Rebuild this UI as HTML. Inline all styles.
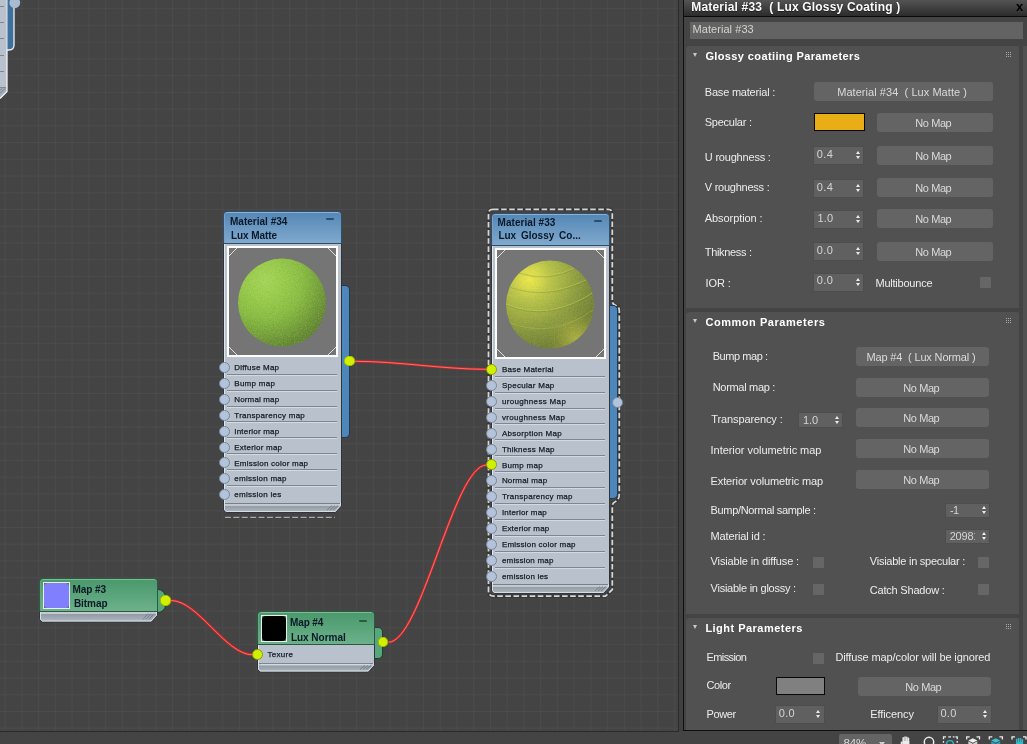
<!DOCTYPE html>
<html><head><meta charset="utf-8"><title>Slate Material Editor</title>
<style>
*{box-sizing:border-box;margin:0;padding:0}
html,body{width:1027px;height:744px;overflow:hidden;background:#444;font-family:"Liberation Sans",sans-serif;}
.t{position:absolute;white-space:pre;will-change:transform}
#canvas{position:absolute;left:0;top:0;width:678px;height:731px;overflow:hidden;background-color:#444;
 background-image:linear-gradient(to right,#4b4b4b 1px,transparent 1px),linear-gradient(to bottom,#4b4b4b 1px,transparent 1px);
 background-size:16.74px 16.74px;background-position:4.7px 8.2px;}
#cvr{position:absolute;left:678px;top:0;width:1px;height:732px;background:#2b2b2b}
#cvb{position:absolute;left:0;top:731px;width:679px;height:1px;background:#2b2b2b}
#gap{position:absolute;left:679px;top:0;width:4px;height:731px;background:#404040}
#pl{position:absolute;left:683px;top:0;width:1px;height:731px;background:#111}
#pb{position:absolute;left:683px;top:730px;width:344px;height:1px;background:#111}
#panel{position:absolute;left:684px;top:0;width:343px;height:730px;background:#444;overflow:hidden}
#ptitle{position:absolute;left:0;top:0;width:343px;height:16px;background:linear-gradient(#545454,#2c2c2c);}
#pline{position:absolute;left:0;top:16px;width:343px;height:1px;background:#0a0a0a}
#pname{position:absolute;left:6px;top:22px;width:333px;height:17px;background:#636363}
#pscroll{position:absolute;left:339px;top:46px;width:4px;height:684px;background:#515151}
.roll{position:absolute;left:2px;width:333px;background:#515151;border-radius:4px 2px 0 0}
.tri{position:absolute;width:0;height:0;border-left:2.8px solid transparent;border-right:2.8px solid transparent;border-top:4.6px solid #c8c8c8}
.grip{position:absolute;width:1px;height:1px;background:#a8a8a8;box-shadow:2px 0 #a8a8a8,4px 0 #a8a8a8,0 2px #a8a8a8,2px 2px #a8a8a8,4px 2px #a8a8a8,0 4px #a8a8a8,2px 4px #a8a8a8,4px 4px #a8a8a8}
.btn{position:absolute;background:#646464;border-radius:3px}
.spin{position:absolute;background:#606060;box-shadow:0 0 0 0.5px #4a4a4a}
.spin:before{content:"";position:absolute;right:3.2px;top:calc(50% - 4.5px);border-left:2.9px solid transparent;border-right:2.9px solid transparent;border-bottom:3.7px solid #ececec}
.spin:after{content:"";position:absolute;right:3.2px;top:calc(50% + 1px);border-left:2.9px solid transparent;border-right:2.9px solid transparent;border-top:3.7px solid #ececec}
.sw{position:absolute;border:1px solid #080808}
.cb{position:absolute;width:11px;height:11px;background:#666;border-radius:1px}

/* nodes */
.hd{position:absolute;border:1px solid #2d4e6e;border-radius:4px 4px 0 0;background:linear-gradient(#5487b6,#80a9cd);box-shadow:inset 0 1px 0 #8db2d4, inset 1px 0 0 #76a0c8}
.hd.g{border-color:#2b5a41;background:linear-gradient(#4a986c,#6cb18a);box-shadow:inset 0 1px 0 #7cbc97, inset 1px 0 0 #62a882}
.min{position:absolute;width:8px;height:2px;background:#2c4d6e;border-radius:1px}
.min.g{background:#2b5a41}
.body{position:absolute;background:#b9c2cc;border:1px solid #2f353c;border-top:none;border-bottom:none;box-shadow:inset 1px 0 0 #dde4ea}
.thumb{position:absolute;border:2px solid #fff;background:#757575;overflow:hidden}
.sock{position:absolute;width:11px;height:11px;border-radius:50%;background:#b3c4da;border:1px solid #76869a}
.sock.lit{background:#d0f200;border-color:#8a9c10}
.sep{position:absolute;height:1px;background:#7e8791;box-shadow:0 1px 0 #d3dae1}
.foot{position:absolute;background:linear-gradient(#c6cdd5 0,#c6cdd5 22%,#8f98a2 32%,#a9b1ba 100%);border:1px solid #e3e9ef;border-top:none;border-radius:0 0 0 3px}
.tab{position:absolute;background:#4c86ba;border:1px solid #24384c;border-left:none;border-radius:0 5px 5px 0}
.tab.g{background:#58a67b;border-color:#1f4030}
.mth{position:absolute;border:1px solid #e6efe8;background:#5b6f66;overflow:hidden}
.mth:before{content:"";position:absolute;left:0;top:0;right:0;bottom:0;border-radius:4px;background:var(--c)}
.osock{position:absolute;width:10.8px;height:10.8px;border-radius:50%;background:#d0f200;box-shadow:inset 0 0 0 0.6px #8ea400}
</style></head>
<body>
<div id="canvas">
<svg style="position:absolute;left:0;top:0" width="0" height="0"><defs><linearGradient id="fg10" x1="0" y1="0" x2="0" y2="1"><stop offset="0" stop-color="#c3cad2"/><stop offset="0.26" stop-color="#c3cad2"/><stop offset="0.3" stop-color="#939ca6"/><stop offset="0.85" stop-color="#aab2bb"/><stop offset="1" stop-color="#b6bec6"/></linearGradient><linearGradient id="fg11" x1="0" y1="0" x2="0" y2="1"><stop offset="0" stop-color="#c3cad2"/><stop offset="0.3" stop-color="#c3cad2"/><stop offset="0.34" stop-color="#939ca6"/><stop offset="0.85" stop-color="#aab2bb"/><stop offset="1" stop-color="#b6bec6"/></linearGradient><linearGradient id="fg9" x1="0" y1="0" x2="0" y2="1"><stop offset="0" stop-color="#c3cad2"/><stop offset="0.2" stop-color="#c3cad2"/><stop offset="0.25" stop-color="#939ca6"/><stop offset="0.85" stop-color="#aab2bb"/><stop offset="1" stop-color="#b6bec6"/></linearGradient></defs></svg>
<svg style="position:absolute;left:0;top:0" width="24" height="102"><path d="M0 0H7V91.500L0.500 98H0Z" fill="#b9c2cc"/><path d="M0 88H7V91.500L0.500 98H0Z" fill="#a4adb7"/><path d="M0 6.500H4M0 22.500H4M0 38.500H4M0 55.500H4M0 71.500H4M0 87.500H6" stroke="#7e8791" stroke-width="1"/><path d="M0 90.500L2 88.500M0 93.500L5 88.500" stroke="#6c7681" stroke-width="0.8"/><path d="M7 0H14V45Q14 50 9 50H7Z" fill="#3f6f9b"/><path d="M14 7V45Q14 50 9 50H7V91.500L0 98.500" fill="none" stroke="#eef3f8" stroke-width="1.3"/><path d="M7 0V50" stroke="#dfe7ee" stroke-width="1"/><circle cx="14.800" cy="2.800" r="5.400" fill="#a9bbd3"/></svg>
<svg style="position:absolute;left:0;top:0" width="678" height="730" fill="none"><path d="M354.800 361.300 C398.700 361.300 442.600 369.300 486.500 369.300" stroke="#cf2626" stroke-width="2.5"/><path d="M354.800 361.300 C398.700 361.300 442.600 369.300 486.500 369.300" stroke="#f67878" stroke-width="0.9"/><path d="M171 600.500 C198.200 600.500 225.400 654.800 252.600 654.800" stroke="#cf2626" stroke-width="2.5"/><path d="M171 600.500 C198.200 600.500 225.400 654.800 252.600 654.800" stroke="#f67878" stroke-width="0.9"/><path d="M388.500 642.200 C421.200 642.200 453.800 465 486.500 465" stroke="#cf2626" stroke-width="2.5"/><path d="M388.500 642.200 C421.200 642.200 453.800 465 486.500 465" stroke="#f67878" stroke-width="0.9"/></svg>
<div class="tab" style="left:341px;top:285px;width:9px;height:153px"></div>
<div class="body" style="left:223px;top:243px;width:119px;height:261px"></div>
<svg style="position:absolute;left:223px;top:503px" width="119" height="10"><polygon points="0.5,0 0.5,7 3,9.5 112.5,9.5 118.5,3.0 118.5,0" fill="url(#fg10)" stroke="#2f353c" stroke-width="1"/><polyline points="1.5,0 1.5,6.7 3.4,8.5 112.1,8.5 117.5,2.6 117.5,0" fill="none" stroke="#d6dde4" stroke-width="1"/><path d="M104 7L109 2.5M107 7L112 2.5M110 7L115 2.5" stroke="#6c7681" stroke-width="0.8"/></svg>
<div class="hd" style="left:223px;top:211px;width:119px;height:33px"></div>
<div class="thumb" style="left:226.7px;top:246px;width:111px;height:111px"><svg style="position:absolute;left:0;top:0" width="107" height="107"><defs><radialGradient id="sg1" cx="0.31" cy="0.25" r="0.78" fx="0.31" fy="0.25"><stop offset="0" stop-color="#a6d657"/><stop offset="0.28" stop-color="#97cc48"/><stop offset="0.55" stop-color="#87bd3e"/><stop offset="0.78" stop-color="#73a234"/><stop offset="1" stop-color="#5f8529"/></radialGradient><filter id="nz1" x="-5%" y="-5%" width="110%" height="110%"><feTurbulence type="fractalNoise" baseFrequency="0.75" numOctaves="2" seed="5" result="n"/><feColorMatrix in="n" type="matrix" values="0 0 0 0 0  0 0 0 0 0  0 0 0 0 0  0.252 0 0 0 -0.090" result="dk"/><feColorMatrix in="n" type="matrix" values="0 0 0 0 1  0 0 0 0 1  0 0 0 0 0.6  0 0.204 0 0 -0.078" result="lt"/><feGaussianBlur in="SourceGraphic" stdDeviation="0.45" result="b"/><feComposite in="dk" in2="b" operator="atop" result="c1"/><feComposite in="lt" in2="c1" operator="atop"/></filter></defs><g filter="url(#nz1)"><circle cx="53" cy="54.600" r="44" fill="url(#sg1)"/></g></svg><svg style="position:absolute;left:0;top:0" width="107" height="107"><g stroke="#e0e0e0" stroke-width="1" fill="none"><path d="M0 8 L8 0"/><path d="M99 0 L107 8"/><path d="M0 99 L8 107"/><path d="M99 107 L107 99"/></g></svg></div>
<div class="sep" style="left:227px;width:110px;top:374px"></div>
<span class="sock" style="left:218.5px;top:362.0px"></span>
<span class="t" style="left:234px;top:362px;font-size:8px;line-height:11px;color:#151c25;padding-left:0.30px;letter-spacing:0.223px;-webkit-text-stroke:0.25px #151c25;">Diffuse Map</span>
<div class="sep" style="left:227px;width:110px;top:390px"></div>
<span class="sock" style="left:218.5px;top:377.9px"></span>
<span class="t" style="left:234px;top:378px;font-size:8px;line-height:11px;color:#151c25;padding-left:0.30px;letter-spacing:0.264px;-webkit-text-stroke:0.25px #151c25;">Bump map</span>
<div class="sep" style="left:227px;width:110px;top:406px"></div>
<span class="sock" style="left:218.5px;top:393.8px"></span>
<span class="t" style="left:234px;top:394px;font-size:8px;line-height:11px;color:#151c25;padding-left:0.30px;letter-spacing:0.142px;-webkit-text-stroke:0.25px #151c25;">Normal map</span>
<div class="sep" style="left:227px;width:110px;top:421px"></div>
<span class="sock" style="left:218.5px;top:409.7px"></span>
<span class="t" style="left:234px;top:410px;font-size:8px;line-height:11px;color:#151c25;padding-left:0.30px;letter-spacing:0.275px;-webkit-text-stroke:0.25px #151c25;">Transparency map</span>
<div class="sep" style="left:227px;width:110px;top:437px"></div>
<span class="sock" style="left:218.5px;top:425.6px"></span>
<span class="t" style="left:234px;top:426px;font-size:8px;line-height:11px;color:#151c25;padding-left:0.30px;letter-spacing:0.193px;-webkit-text-stroke:0.25px #151c25;">Interior map</span>
<div class="sep" style="left:227px;width:110px;top:453px"></div>
<span class="sock" style="left:218.5px;top:441.5px"></span>
<span class="t" style="left:234px;top:442px;font-size:8px;line-height:11px;color:#151c25;padding-left:0.30px;letter-spacing:0.220px;-webkit-text-stroke:0.25px #151c25;">Exterior map</span>
<div class="sep" style="left:227px;width:110px;top:469px"></div>
<span class="sock" style="left:218.5px;top:457.4px"></span>
<span class="t" style="left:234px;top:458px;font-size:8px;line-height:11px;color:#151c25;padding-left:0.30px;letter-spacing:0.233px;-webkit-text-stroke:0.25px #151c25;">Emission color map</span>
<div class="sep" style="left:227px;width:110px;top:485px"></div>
<span class="sock" style="left:218.5px;top:473.3px"></span>
<span class="t" style="left:234px;top:473px;font-size:8px;line-height:11px;color:#151c25;padding-left:0.30px;letter-spacing:0.262px;-webkit-text-stroke:0.25px #151c25;">emission map</span>
<span class="sock" style="left:218.5px;top:489.2px"></span>
<span class="t" style="left:234px;top:489px;font-size:8px;line-height:11px;color:#151c25;padding-left:0.30px;letter-spacing:0.257px;-webkit-text-stroke:0.25px #151c25;">emission ies</span>
<span class="t" style="left:230px;top:215px;font-size:10px;line-height:14px;color:#0b1828;letter-spacing:0.011px;font-weight:bold;">Material #34</span>
<span class="t" style="left:231px;top:229px;font-size:10px;line-height:14px;color:#0b1828;letter-spacing:-0.086px;font-weight:bold;">Lux Matte</span>
<span class="min" style="left:326px;top:218px"></span>
<div class="osock" style="left:343.900px;top:355.700px"></div>
<svg style="position:absolute;left:225px;top:516px" width="112" height="3"><path d="M0 1.300H110" stroke="#c4c4c4" stroke-width="1" stroke-dasharray="5.900 2.500"/></svg>
<svg style="position:absolute;left:0;top:0" width="678" height="730" fill="none"><path d="M493 209.300 H608 Q612.300 209.300 612.300 213.500 V302 Q612.800 304.500 616 305.500 Q619.300 306.500 619.300 311 V494 Q619.300 499.500 615.500 501.500 Q612.300 503 612.300 506 V589.500 L605.500 596.200 H494 Q488.500 596.200 488.500 591 V213.500 Q488.500 209.300 493 209.300 Z" stroke="#383838" stroke-width="3.4"/><path d="M493 209.300 H608 Q612.300 209.300 612.300 213.500 V302 Q612.800 304.500 616 305.500 Q619.300 306.500 619.300 311 V494 Q619.300 499.500 615.500 501.500 Q612.300 503 612.300 506 V589.500 L605.500 596.200 H494 Q488.500 596.200 488.500 591 V213.500 Q488.500 209.300 493 209.300 Z" stroke="#d6d6d6" stroke-width="1.8" stroke-dasharray="5.600 2.500"/></svg>
<div class="tab" style="left:609px;top:304.500px;width:8.500px;height:194px"></div>
<div class="body" style="left:491px;top:245px;width:119px;height:340px"></div>
<svg style="position:absolute;left:491px;top:584px" width="119" height="10"><polygon points="0.5,0 0.5,7 3,9.5 112.5,9.5 118.5,3.0 118.5,0" fill="url(#fg10)" stroke="#2f353c" stroke-width="1"/><polyline points="1.5,0 1.5,6.7 3.4,8.5 112.1,8.5 117.5,2.6 117.5,0" fill="none" stroke="#d6dde4" stroke-width="1"/><path d="M104 7L109 2.5M107 7L112 2.5M110 7L115 2.5" stroke="#6c7681" stroke-width="0.8"/></svg>
<div class="hd" style="left:491px;top:213px;width:119px;height:33px"></div>
<div class="thumb" style="left:494.7px;top:248px;width:111px;height:111px"><svg style="position:absolute;left:0;top:0" width="0" height="0"><defs><clipPath id="cp2"><circle cx="53" cy="54.600" r="44"/></clipPath><radialGradient id="rim2" gradientUnits="userSpaceOnUse" cx="79" cy="88" r="30"><stop offset="0" stop-color="#d2cd48" stop-opacity="0.6"/><stop offset="0.35" stop-color="#d2cd48" stop-opacity="0.36"/><stop offset="0.65" stop-color="#d2cd48" stop-opacity="0.12"/><stop offset="0.85" stop-color="#d2cd48" stop-opacity="0.03"/><stop offset="1" stop-color="#d2cd48" stop-opacity="0"/></radialGradient></defs></svg><svg style="position:absolute;left:0;top:0" width="107" height="107"><defs><radialGradient id="sg2" cx="0.27" cy="0.21" r="0.78" fx="0.27" fy="0.21"><stop offset="0" stop-color="#eee84a"/><stop offset="0.13" stop-color="#dbdc4a"/><stop offset="0.3" stop-color="#bac546"/><stop offset="0.52" stop-color="#a0af40"/><stop offset="0.76" stop-color="#86963a"/><stop offset="1" stop-color="#71812e"/></radialGradient><filter id="nz2" x="-5%" y="-5%" width="110%" height="110%"><feTurbulence type="fractalNoise" baseFrequency="0.75" numOctaves="2" seed="6" result="n"/><feColorMatrix in="n" type="matrix" values="0 0 0 0 0  0 0 0 0 0  0 0 0 0 0  0.189 0 0 0 -0.068" result="dk"/><feColorMatrix in="n" type="matrix" values="0 0 0 0 1  0 0 0 0 1  0 0 0 0 0.6  0 0.153 0 0 -0.059" result="lt"/><feGaussianBlur in="SourceGraphic" stdDeviation="0.45" result="b"/><feComposite in="dk" in2="b" operator="atop" result="c1"/><feComposite in="lt" in2="c1" operator="atop"/></filter></defs><g filter="url(#nz2)"><circle cx="53" cy="54.600" r="44" fill="url(#sg2)"/><g fill="none" stroke="#c9d056" stroke-opacity="0.55" stroke-width="1" clip-path="url(#cp2)"><path d="M13 36 Q50 50 93 28"/><path d="M9 54 Q52 72 97 42"/><path d="M22 22 Q50 32 80 17"/><path d="M11 72 Q54 90 96 60" stroke-opacity="0.3"/></g><g fill="none" stroke="#6f7f30" stroke-opacity="0.4" stroke-width="0.8" clip-path="url(#cp2)"><path d="M13 37.200 Q50 51.200 93 29.200"/><path d="M9 55.200 Q52 73.200 97 43.200"/><path d="M22 23.200 Q50 33.200 80 18.200"/></g><circle cx="53" cy="54.600" r="44" fill="url(#rim2)"/></g></svg><svg style="position:absolute;left:0;top:0" width="107" height="107"><g stroke="#e0e0e0" stroke-width="1" fill="none"><path d="M0 8 L8 0"/><path d="M99 0 L107 8"/><path d="M0 99 L8 107"/><path d="M99 107 L107 99"/></g></svg></div>
<div class="sep" style="left:495px;width:110px;top:376px"></div>
<span class="sock lit" style="left:486.1px;top:364.0px"></span>
<span class="t" style="left:501px;top:364px;font-size:8px;line-height:11px;color:#151c25;padding-left:0.90px;letter-spacing:0.237px;-webkit-text-stroke:0.25px #151c25;">Base Material</span>
<div class="sep" style="left:495px;width:110px;top:392px"></div>
<span class="sock" style="left:486.1px;top:379.9px"></span>
<span class="t" style="left:501px;top:380px;font-size:8px;line-height:11px;color:#151c25;padding-left:0.90px;letter-spacing:0.278px;-webkit-text-stroke:0.25px #151c25;">Specular Map</span>
<div class="sep" style="left:495px;width:110px;top:408px"></div>
<span class="sock" style="left:486.1px;top:395.8px"></span>
<span class="t" style="left:501px;top:396px;font-size:8px;line-height:11px;color:#151c25;padding-left:0.90px;letter-spacing:0.336px;-webkit-text-stroke:0.25px #151c25;">uroughness Map</span>
<div class="sep" style="left:495px;width:110px;top:423px"></div>
<span class="sock" style="left:486.1px;top:411.7px"></span>
<span class="t" style="left:501px;top:412px;font-size:8px;line-height:11px;color:#151c25;padding-left:0.90px;letter-spacing:0.310px;-webkit-text-stroke:0.25px #151c25;">vroughness Map</span>
<div class="sep" style="left:495px;width:110px;top:439px"></div>
<span class="sock" style="left:486.1px;top:427.6px"></span>
<span class="t" style="left:501px;top:428px;font-size:8px;line-height:11px;color:#151c25;padding-left:0.90px;letter-spacing:0.291px;-webkit-text-stroke:0.25px #151c25;">Absorption Map</span>
<div class="sep" style="left:495px;width:110px;top:455px"></div>
<span class="sock" style="left:486.1px;top:443.5px"></span>
<span class="t" style="left:501px;top:444px;font-size:8px;line-height:11px;color:#151c25;padding-left:0.90px;letter-spacing:0.259px;-webkit-text-stroke:0.25px #151c25;">Thikness Map</span>
<div class="sep" style="left:495px;width:110px;top:471px"></div>
<span class="sock lit" style="left:486.1px;top:459.4px"></span>
<span class="t" style="left:501px;top:460px;font-size:8px;line-height:11px;color:#151c25;padding-left:0.90px;letter-spacing:0.289px;-webkit-text-stroke:0.25px #151c25;">Bump map</span>
<div class="sep" style="left:495px;width:110px;top:487px"></div>
<span class="sock" style="left:486.1px;top:475.3px"></span>
<span class="t" style="left:501px;top:475px;font-size:8px;line-height:11px;color:#151c25;padding-left:0.90px;letter-spacing:0.192px;-webkit-text-stroke:0.25px #151c25;">Normal map</span>
<div class="sep" style="left:495px;width:110px;top:503px"></div>
<span class="sock" style="left:486.1px;top:491.2px"></span>
<span class="t" style="left:501px;top:491px;font-size:8px;line-height:11px;color:#151c25;padding-left:0.90px;letter-spacing:0.281px;-webkit-text-stroke:0.25px #151c25;">Transparency map</span>
<div class="sep" style="left:495px;width:110px;top:519px"></div>
<span class="sock" style="left:486.1px;top:507.1px"></span>
<span class="t" style="left:501px;top:507px;font-size:8px;line-height:11px;color:#151c25;padding-left:0.90px;letter-spacing:0.201px;-webkit-text-stroke:0.25px #151c25;">Interior map</span>
<div class="sep" style="left:495px;width:110px;top:535px"></div>
<span class="sock" style="left:486.1px;top:523.0px"></span>
<span class="t" style="left:501px;top:523px;font-size:8px;line-height:11px;color:#151c25;padding-left:0.90px;letter-spacing:0.187px;-webkit-text-stroke:0.25px #151c25;">Exterior map</span>
<div class="sep" style="left:495px;width:110px;top:551px"></div>
<span class="sock" style="left:486.1px;top:538.9px"></span>
<span class="t" style="left:501px;top:539px;font-size:8px;line-height:11px;color:#151c25;padding-left:0.90px;letter-spacing:0.227px;-webkit-text-stroke:0.25px #151c25;">Emission color map</span>
<div class="sep" style="left:495px;width:110px;top:567px"></div>
<span class="sock" style="left:486.1px;top:554.8px"></span>
<span class="t" style="left:501px;top:555px;font-size:8px;line-height:11px;color:#151c25;padding-left:0.90px;letter-spacing:0.195px;-webkit-text-stroke:0.25px #151c25;">emission map</span>
<span class="sock" style="left:486.1px;top:570.7px"></span>
<span class="t" style="left:501px;top:571px;font-size:8px;line-height:11px;color:#151c25;padding-left:0.90px;letter-spacing:0.199px;-webkit-text-stroke:0.25px #151c25;">emission ies</span>
<span class="t" style="left:497px;top:216px;font-size:10px;line-height:14px;color:#0b1828;padding-left:0.60px;letter-spacing:0.045px;font-weight:bold;">Material #33</span>
<span class="t" style="left:498px;top:229px;font-size:10px;line-height:14px;color:#0b1828;padding-left:0.40px;letter-spacing:-0.016px;font-weight:bold;word-spacing:2.100px;">Lux Glossy Co...</span>
<span class="min" style="left:593.500px;top:220px"></span>
<div class="sock" style="left:611.600px;top:397.300px"></div>
<div class="tab g" style="left:157px;top:588.500px;width:9px;height:24px;border-radius:0 8px 8px 0"></div>
<svg style="position:absolute;left:39px;top:611px" width="119" height="11.5"><polygon points="0.5,0 0.5,8.5 3,11.0 112.5,11.0 118.5,4.5 118.5,0" fill="url(#fg10)" stroke="#2f353c" stroke-width="1"/><polyline points="1.5,0 1.5,8.2 3.4,10.0 112.1,10.0 117.5,4.1 117.5,0" fill="none" stroke="#d6dde4" stroke-width="1"/><path d="M104 8.5L109 2.5M107 8.5L112 2.5M110 8.5L115 2.5" stroke="#6c7681" stroke-width="0.8"/></svg>
<div class="hd g" style="left:39px;top:578px;width:119px;height:34px"></div>
<div class="mth" style="left:42.700px;top:581.700px;width:27.500px;height:27px;--c:#8080ff"></div>
<div class="osock" style="left:160.200px;top:595px"></div>
<span class="t" style="left:72px;top:583px;font-size:10px;line-height:14px;color:#0b1828;padding-left:0.60px;letter-spacing:-0.084px;font-weight:bold;">Map #3</span>
<span class="t" style="left:73px;top:597px;font-size:10px;line-height:14px;color:#0b1828;padding-left:0.90px;letter-spacing:-0.034px;font-weight:bold;">Bitmap</span>
<div class="tab g" style="left:374px;top:627px;width:9px;height:32px"></div>
<div class="body" style="left:257px;top:644px;width:118px;height:20px"></div>
<svg style="position:absolute;left:257px;top:663px" width="118" height="9.5"><polygon points="0.5,0 0.5,6.5 3,9.0 111.5,9.0 117.5,2.5 117.5,0" fill="url(#fg10)" stroke="#2f353c" stroke-width="1"/><polyline points="1.5,0 1.5,6.2 3.4,8.0 111.1,8.0 116.5,2.1 116.5,0" fill="none" stroke="#d6dde4" stroke-width="1"/><path d="M103 6.5L108 2.5M106 6.5L111 2.5M109 6.5L114 2.5" stroke="#6c7681" stroke-width="0.8"/></svg>
<div class="hd g" style="left:257px;top:611px;width:118px;height:34px"></div>
<span class="min g" style="left:359.200px;top:619.500px"></span>
<div class="mth" style="left:260.800px;top:615px;width:26.600px;height:26.800px;--c:#000"></div>
<div class="sep" style="left:261px;width:109px;top:663px"></div>
<span class="sock lit" style="left:251.800px;top:649.100px"></span>
<div class="osock" style="left:377.600px;top:636.700px"></div>
<span class="t" style="left:290px;top:616px;font-size:10px;line-height:14px;color:#0b1828;padding-left:0.10px;letter-spacing:-0.151px;font-weight:bold;">Map #4</span>
<span class="t" style="left:290px;top:631px;font-size:10px;line-height:14px;color:#0b1828;padding-left:0.90px;letter-spacing:-0.022px;font-weight:bold;">Lux Normal</span>
<span class="t" style="left:267px;top:649px;font-size:8px;line-height:11px;color:#151c25;padding-left:0.50px;letter-spacing:0.281px;-webkit-text-stroke:0.25px #151c25;">Texure</span>
</div>
<div id="cvr"></div><div id="cvb"></div><div id="gap"></div><div id="pl"></div>
<div id="panel">
<div id="ptitle"></div><div id="pline"></div><div id="pname"></div><div id="pscroll"></div>
<span class="t" style="left:7px;top:-1px;font-size:12px;line-height:17px;color:#fbfbfb;padding-left:0.30px;letter-spacing:0.180px;font-weight:bold;text-shadow:0 1px 1px #1c1c1c;">Material #33  ( Lux Glossy Coating )</span>
<span class="t" style="left:332px;top:-2px;font-size:13px;line-height:18px;color:#000;font-weight:bold;">x</span>
<span class="t" style="left:8px;top:22px;font-size:11px;line-height:15px;color:#d4d4cc;padding-left:0.50px;letter-spacing:0.063px;">Material #33</span>
<div class="roll" style="top:46px;height:262px"></div><span class="tri" style="left:8.6px;top:52.6px"></span><span class="grip" style="left:322px;top:52px"></span><span class="t" style="left:21px;top:49px;font-size:11px;line-height:15px;color:#fff;padding-left:0.40px;letter-spacing:0.381px;font-weight:bold;">Glossy coatiing Parameters</span>
<span class="t" style="left:20px;top:85px;font-size:11px;line-height:15px;color:#ececec;padding-left:0.80px;letter-spacing:-0.205px;">Base material :</span>
<span class="btn" style="left:130px;top:82px;width:178.5px;height:19px"></span><span class="t" style="left:153px;top:85px;font-size:11px;line-height:15px;color:#dadada;padding-left:0.20px;letter-spacing:0.052px;">Material #34  ( Lux Matte )</span>
<span class="t" style="left:20px;top:115px;font-size:11px;line-height:15px;color:#ececec;padding-left:0.80px;letter-spacing:-0.263px;">Specular :</span>
<span class="sw" style="left:130px;top:113px;width:51px;height:18px;background:#e9ad15"></span>
<span class="btn" style="left:193px;top:113px;width:115.5px;height:19px"></span><span class="t" style="left:231px;top:116px;font-size:11px;line-height:15px;color:#dadada;padding-left:0.30px;letter-spacing:-0.422px;">No Map</span>
<span class="t" style="left:20px;top:150px;font-size:11px;line-height:15px;color:#ececec;padding-left:0.80px;letter-spacing:-0.199px;">U roughness :</span>
<span class="spin" style="left:130px;top:146.5px;width:49.299999999999955px;height:17.0px"></span><span class="t" style="left:132px;top:147px;font-size:11px;line-height:15px;color:#d4d4d4;padding-left:0.70px;letter-spacing:0.401px;">0.4</span>
<span class="btn" style="left:193px;top:146px;width:115.5px;height:19px"></span><span class="t" style="left:231px;top:149px;font-size:11px;line-height:15px;color:#dadada;padding-left:0.30px;letter-spacing:-0.422px;">No Map</span>
<span class="t" style="left:20px;top:180px;font-size:11px;line-height:15px;color:#ececec;padding-left:0.80px;letter-spacing:-0.244px;">V roughness :</span>
<span class="spin" style="left:130px;top:179.5px;width:49.299999999999955px;height:17.0px"></span><span class="t" style="left:132px;top:180px;font-size:11px;line-height:15px;color:#d4d4d4;padding-left:0.70px;letter-spacing:0.401px;">0.4</span>
<span class="btn" style="left:193px;top:178px;width:115.5px;height:19px"></span><span class="t" style="left:231px;top:181px;font-size:11px;line-height:15px;color:#dadada;padding-left:0.30px;letter-spacing:-0.422px;">No Map</span>
<span class="t" style="left:20px;top:211px;font-size:11px;line-height:15px;color:#ececec;padding-left:0.80px;letter-spacing:-0.075px;">Absorption :</span>
<span class="spin" style="left:130px;top:210.5px;width:49.299999999999955px;height:17.0px"></span><span class="t" style="left:133px;top:211px;font-size:11px;line-height:15px;color:#d4d4d4;padding-left:0.50px;letter-spacing:0.134px;">1.0</span>
<span class="btn" style="left:193px;top:209px;width:115.5px;height:19px"></span><span class="t" style="left:231px;top:212px;font-size:11px;line-height:15px;color:#dadada;padding-left:0.30px;letter-spacing:-0.422px;">No Map</span>
<span class="t" style="left:20px;top:245px;font-size:11px;line-height:15px;color:#ececec;padding-left:0.80px;letter-spacing:-0.324px;">Thikness :</span>
<span class="spin" style="left:130px;top:242.5px;width:49.299999999999955px;height:17.0px"></span><span class="t" style="left:132px;top:243px;font-size:11px;line-height:15px;color:#d4d4d4;padding-left:0.70px;letter-spacing:0.401px;">0.0</span>
<span class="btn" style="left:193px;top:242px;width:115.5px;height:19px"></span><span class="t" style="left:231px;top:245px;font-size:11px;line-height:15px;color:#dadada;padding-left:0.30px;letter-spacing:-0.422px;">No Map</span>
<span class="t" style="left:21px;top:276px;font-size:11px;line-height:15px;color:#ececec;padding-left:0.60px;letter-spacing:-0.094px;">IOR :</span>
<span class="spin" style="left:130px;top:273.5px;width:49.299999999999955px;height:17.0px"></span><span class="t" style="left:132px;top:273px;font-size:11px;line-height:15px;color:#d4d4d4;padding-left:0.70px;letter-spacing:0.401px;">0.0</span>
<span class="t" style="left:191px;top:276px;font-size:11px;line-height:15px;color:#ececec;padding-left:0.50px;letter-spacing:-0.230px;">Multibounce</span>
<span class="cb" style="left:295.5px;top:277px"></span>
<div class="roll" style="top:311.5px;height:302.5px"></div><span class="tri" style="left:8.6px;top:319px"></span><span class="grip" style="left:322px;top:318px"></span><span class="t" style="left:21px;top:315px;font-size:11px;line-height:15px;color:#fff;padding-left:0.40px;letter-spacing:0.550px;font-weight:bold;">Common Parameters</span>
<span class="t" style="left:28px;top:349px;font-size:11px;line-height:15px;color:#ececec;padding-left:0.70px;letter-spacing:-0.431px;">Bump map :</span>
<span class="btn" style="left:171.5px;top:347px;width:133.5px;height:19px"></span><span class="t" style="left:182px;top:350px;font-size:11px;line-height:15px;color:#dadada;padding-left:0.50px;letter-spacing:-0.158px;">Map #4  ( Lux Normal )</span>
<span class="t" style="left:28px;top:380px;font-size:11px;line-height:15px;color:#ececec;padding-left:0.70px;letter-spacing:-0.303px;">Normal map :</span>
<span class="btn" style="left:171.5px;top:378px;width:133.5px;height:19px"></span><span class="t" style="left:219px;top:381px;font-size:11px;line-height:15px;color:#dadada;padding-left:0.30px;letter-spacing:-0.422px;">No Map</span>
<span class="t" style="left:27px;top:412px;font-size:11px;line-height:15px;color:#ececec;padding-left:0.30px;letter-spacing:-0.119px;">Transparency :</span>
<span class="spin" style="left:115px;top:413px;width:43px;height:14px"></span><span class="t" style="left:119px;top:413px;font-size:11px;line-height:15px;color:#d4d4d4;letter-spacing:-0.099px;">1.0</span>
<span class="btn" style="left:171.5px;top:408px;width:133.5px;height:19px"></span><span class="t" style="left:219px;top:411px;font-size:11px;line-height:15px;color:#dadada;padding-left:0.30px;letter-spacing:-0.422px;">No Map</span>
<span class="t" style="left:26px;top:443px;font-size:11px;line-height:15px;color:#ececec;padding-left:0.60px;letter-spacing:-0.047px;">Interior volumetric map</span>
<span class="btn" style="left:171.5px;top:439px;width:133.5px;height:19px"></span><span class="t" style="left:219px;top:442px;font-size:11px;line-height:15px;color:#dadada;padding-left:0.30px;letter-spacing:-0.422px;">No Map</span>
<span class="t" style="left:26px;top:474px;font-size:11px;line-height:15px;color:#ececec;padding-left:0.60px;letter-spacing:-0.137px;">Exterior volumetric map</span>
<span class="btn" style="left:171.5px;top:470px;width:133.5px;height:19px"></span><span class="t" style="left:219px;top:473px;font-size:11px;line-height:15px;color:#dadada;padding-left:0.30px;letter-spacing:-0.422px;">No Map</span>
<span class="t" style="left:26px;top:503px;font-size:11px;line-height:15px;color:#ececec;padding-left:0.60px;letter-spacing:-0.339px;">Bump/Normal sample :</span>
<span class="spin" style="left:262px;top:503.5px;width:43px;height:13.5px"></span><span class="t" style="left:266px;top:503px;font-size:11px;line-height:15px;color:#d4d4d4;letter-spacing:-0.641px;">-1</span>
<span class="t" style="left:26px;top:529px;font-size:11px;line-height:15px;color:#ececec;padding-left:0.60px;letter-spacing:-0.158px;">Material id :</span>
<span class="spin" style="left:262px;top:529.5px;width:43px;height:13.5px"></span><span class="t" style="left:265px;top:529px;font-size:11px;line-height:15px;color:#d4d4d4;padding-left:0.70px;letter-spacing:-0.219px;overflow:hidden;width:25.500px;">20981</span>
<span class="t" style="left:26px;top:554px;font-size:11px;line-height:15px;color:#ececec;padding-left:0.60px;letter-spacing:-0.139px;">Visiable in diffuse :</span>
<span class="cb" style="left:128.5px;top:557px"></span>
<span class="t" style="left:185px;top:554px;font-size:11px;line-height:15px;color:#ececec;padding-left:0.80px;letter-spacing:-0.249px;">Visiable in specular :</span>
<span class="cb" style="left:293.5px;top:556.5px"></span>
<span class="t" style="left:26px;top:581px;font-size:11px;line-height:15px;color:#ececec;padding-left:0.60px;letter-spacing:-0.255px;">Visiable in glossy :</span>
<span class="cb" style="left:128.5px;top:584px"></span>
<span class="t" style="left:185px;top:583px;font-size:11px;line-height:15px;color:#ececec;padding-left:0.80px;letter-spacing:-0.204px;">Catch Shadow :</span>
<span class="cb" style="left:293.5px;top:583.5px"></span>
<div class="roll" style="top:617.5px;height:112.5px"></div><span class="tri" style="left:8.6px;top:624.8px"></span><span class="grip" style="left:322px;top:624px"></span><span class="t" style="left:21px;top:621px;font-size:11px;line-height:15px;color:#fff;padding-left:0.40px;letter-spacing:0.477px;font-weight:bold;">Light Parameters</span>
<span class="t" style="left:22px;top:650px;font-size:11px;line-height:15px;color:#ececec;padding-left:0.50px;letter-spacing:-0.603px;">Emission</span>
<span class="cb" style="left:128.5px;top:652.8px"></span>
<span class="t" style="left:151px;top:650px;font-size:11px;line-height:15px;color:#ececec;padding-left:0.40px;letter-spacing:-0.120px;">Diffuse map/color will be ignored</span>
<span class="t" style="left:22px;top:678px;font-size:11px;line-height:15px;color:#ececec;padding-left:0.50px;letter-spacing:-0.419px;">Color</span>
<span class="sw" style="left:92px;top:677px;width:49px;height:18px;background:#808080"></span>
<span class="btn" style="left:174px;top:677px;width:133px;height:19px"></span><span class="t" style="left:221px;top:680px;font-size:11px;line-height:15px;color:#dadada;padding-left:0.30px;letter-spacing:-0.422px;">No Map</span>
<span class="t" style="left:22px;top:707px;font-size:11px;line-height:15px;color:#ececec;padding-left:0.50px;letter-spacing:-0.397px;">Power</span>
<span class="spin" style="left:92px;top:706px;width:47.5px;height:16.5px"></span><span class="t" style="left:94px;top:706px;font-size:11px;line-height:15px;color:#d4d4d4;padding-left:0.80px;letter-spacing:0.301px;">0.0</span>
<span class="t" style="left:186px;top:707px;font-size:11px;line-height:15px;color:#ececec;padding-left:0.20px;letter-spacing:-0.071px;">Efficency</span>
<span class="spin" style="left:253.5px;top:706px;width:53.0px;height:16.5px"></span><span class="t" style="left:256px;top:706px;font-size:11px;line-height:15px;color:#d4d4d4;padding-left:0.50px;letter-spacing:0.234px;">0.0</span>
</div>
<div id="pb"></div>
<div style="position:absolute;left:839px;top:733.5px;width:53px;height:20px;background:#646464;border-radius:2px"><span style="position:absolute;left:40px;top:8px;border-left:3.5px solid transparent;border-right:3.5px solid transparent;border-top:4px solid #d0d0d0"></span></div>
<span class="t" style="left:843px;top:735px;font-size:11.5px;line-height:16px;color:#dadada;padding-left:0.50px;letter-spacing:-0.177px;">84%</span>
<svg style="position:absolute;left:896px;top:732px" width="131" height="12" fill="none">
<g stroke="#ececec" stroke-width="1.5" stroke-linecap="round"><path d="M7.200 12V5.800M9 12V5M10.800 12V5.200M12.500 12V6.200"/><path d="M5.500 12V10.200"/></g><path d="M6.500 9H13.200V12H6.500Z" fill="#ececec"/>
<circle cx="33" cy="10" r="4.700" stroke="#ececec" stroke-width="1.500"/>
<path d="M47.500 7.300V4.800H50M52.300 4.800H55M56.800 4.800H58.500M59.500 4.800H61.200V7.300M47.500 9V10.800M61.200 9V10.800" stroke="#ececec" stroke-width="1.300"/><circle cx="54" cy="12" r="3.400" stroke="#2fb4c4" stroke-width="1.400"/>
<path d="M70.700 7.500V4.900H73.700M80.500 4.900H83.500V7.500" stroke="#ececec" stroke-width="1.300"/><path d="M76.800 6.300L81.300 8.500L76.800 10.700L72.300 8.500Z" fill="#f0f0f0"/><path d="M72.300 9.300L76.500 11.400V12H72.300ZM81.300 9.300L77.100 11.400V12H81.300Z" fill="#d0d0d0"/>
<path d="M93.300 7.500V4.900H96.300M103.400 4.900H106.400V7.500" stroke="#ececec" stroke-width="1.300"/><path d="M99.700 6.300L104.200 8.500L99.700 10.700L95.200 8.500Z" fill="#3cc0d0"/><path d="M95.200 9.300L99.400 11.400V12H95.200ZM104.200 9.300L100 11.400V12H104.200Z" fill="#2a9fb0"/>
<path d="M116 7.500V4.900H119M127 4.900H130V7.500" stroke="#ececec" stroke-width="1.300"/><g stroke="#35b8c8" stroke-width="1.500" stroke-linecap="round"><path d="M120.800 12V7.300M122.700 12V6.500M124.600 12V6.700M126.400 12V7.700"/></g><path d="M120.200 10H127V12H120.200Z" fill="#35b8c8"/>
</svg>
</body></html>
